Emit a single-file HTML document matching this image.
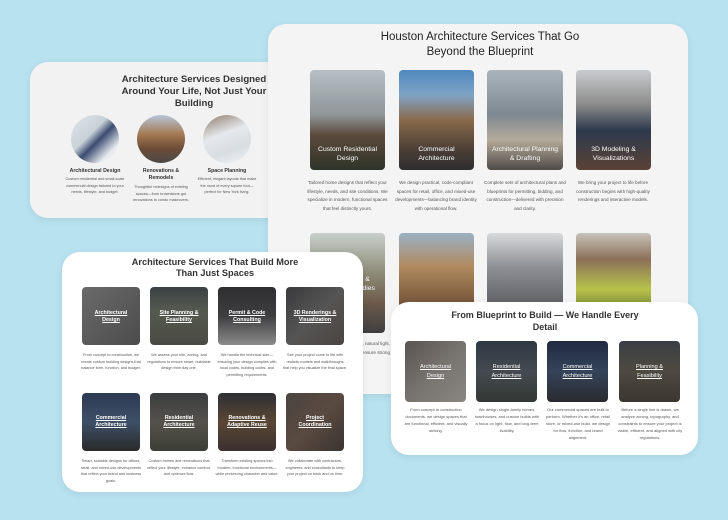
<!DOCTYPE html>
<html><head><meta charset="utf-8"><style>
*{margin:0;padding:0;box-sizing:border-box}
body{width:728px;height:520px;background:#b8e2f0;position:relative;overflow:hidden;font-family:"Liberation Sans",sans-serif}
.card{position:absolute;border-radius:18px;box-shadow:0 2px 8px rgba(0,0,0,.08)}
.ab{position:absolute}
.t{position:absolute;text-align:center;color:#333}
.img{position:absolute;border-radius:4px;overflow:hidden}
.ov{position:absolute;left:6px;right:6px;text-align:center;color:#fff;font-weight:bold}
.d{position:absolute;text-align:center;color:#555;font-size:4.3px;line-height:7.6px}
.u{text-decoration:underline}
</style></head><body>

<!-- Card A -->
<div class="card" style="left:30px;top:62px;width:300px;height:156px;background:#f2f2f2"></div>
<div class="t" style="left:110px;top:74px;width:168px;font-size:9.6px;line-height:12px;font-weight:bold;color:#333">Architecture Services Designed Around Your Life, Not Just Your Building</div>
<div class="ab" style="left:71px;top:115px;width:48px;height:48px;border-radius:50%;background:linear-gradient(135deg,#dfe6ea 0%,#c9d2d8 40%,#3b4b70 55%,#e8ecef 80%)"></div>
<div class="ab" style="left:137px;top:115px;width:48px;height:48px;border-radius:50%;background:linear-gradient(180deg,#b7c6d6 0%,#a47a54 40%,#6d4c36 70%,#4a4a4a 100%)"></div>
<div class="ab" style="left:203px;top:115px;width:48px;height:48px;border-radius:50%;background:linear-gradient(160deg,#8d7a6a 0%,#e5e8ec 40%,#d8dde2 70%,#f0f2f4 100%)"></div>
<div class="t" style="left:65px;top:168px;width:60px;font-size:5.2px;font-weight:bold">Architectural Design</div>
<div class="d" style="left:65px;top:176px;width:60px;font-size:3.8px;line-height:6.5px">Custom residential and small-scale commercial design tailored to your needs, lifestyle, and budget.</div>
<div class="t" style="left:131px;top:168px;width:60px;font-size:5.2px;line-height:7px;font-weight:bold">Renovations &amp; Remodels</div>
<div class="d" style="left:130px;top:184px;width:62px;font-size:3.8px;line-height:6.5px">Thoughtful redesigns of existing spaces—from brownstone gut renovations to condo makeovers.</div>
<div class="t" style="left:197px;top:168px;width:60px;font-size:5.2px;font-weight:bold">Space Planning</div>
<div class="d" style="left:197px;top:176px;width:60px;font-size:3.8px;line-height:6.5px">Efficient, elegant layouts that make the most of every square foot—perfect for New York living.</div>

<!-- Card B -->
<div class="card" style="left:268px;top:24px;width:420px;height:370px;background:#f4f4f4"></div>
<div class="t" style="left:370px;top:30px;width:220px;font-size:11.5px;line-height:15px;color:#222">Houston Architecture Services That Go Beyond the Blueprint</div>
<div class="img" style="left:310px;top:70px;width:75px;height:100px;background:linear-gradient(180deg,#b7bfc4 0%,#8f9599 45%,#5b4a3c 65%,#2e3428 100%)"><div class="ov" style="top:75px;font-size:6.8px;line-height:9px;font-weight:normal">Custom Residential Design</div></div>
<div class="img" style="left:399px;top:70px;width:75px;height:100px;background:linear-gradient(180deg,#4f88c0 0%,#7fa3c4 25%,#8a6a4c 50%,#4a3e36 80%,#2e2e2e 100%)"><div class="ov" style="top:75px;font-size:6.8px;line-height:9px;font-weight:normal">Commercial Architecture</div></div>
<div class="img" style="left:487px;top:70px;width:76px;height:100px;background:linear-gradient(180deg,#a9b4bd 0%,#7e8890 45%,#b4aa9a 70%,#4e4a46 100%)"><div class="ov" style="top:75px;left:2px;right:2px;font-size:6.8px;line-height:9px;font-weight:normal">Architectural Planning &amp; Drafting</div></div>
<div class="img" style="left:576px;top:70px;width:75px;height:100px;background:linear-gradient(180deg,#c9ccce 0%,#8a8a8a 35%,#2e3a4e 60%,#5a4236 100%)"><div class="ov" style="top:75px;font-size:6.8px;line-height:9px;font-weight:normal">3D Modeling &amp; Visualizations</div></div>
<div class="d" style="left:306px;top:179px;width:83px;font-size:4.6px;line-height:8.7px">Tailored home designs that reflect your lifestyle, needs, and site conditions. We specialize in modern, functional spaces that feel distinctly yours.</div>
<div class="d" style="left:394px;top:179px;width:84px;font-size:4.6px;line-height:8.7px">We design practical, code-compliant spaces for retail, office, and mixed-use developments—balancing brand identity with operational flow.</div>
<div class="d" style="left:483px;top:179px;width:84px;font-size:4.6px;line-height:8.7px">Complete sets of architectural plans and blueprints for permitting, bidding, and construction—delivered with precision and clarity.</div>
<div class="d" style="left:571px;top:179px;width:84px;font-size:4.6px;line-height:8.7px">We bring your project to life before construction begins with high-quality renderings and interactive models.</div>
<div class="img" style="left:310px;top:233px;width:75px;height:100px;background:linear-gradient(180deg,#c8cfcc 0%,#8d8c78 40%,#6d5a4a 70%,#3e3e40 100%)"><div class="ov" style="top:42px;font-size:6.8px;line-height:9px;font-weight:normal">3D Modeling &amp; Feasibility Studies</div></div>
<div class="img" style="left:399px;top:233px;width:75px;height:75px;background:linear-gradient(180deg,#9ab0c4 0%,#b08a5e 45%,#6e5036 100%)"></div>
<div class="img" style="left:487px;top:233px;width:76px;height:75px;background:linear-gradient(180deg,#d9dadb 0%,#8d9095 45%,#5a5c60 100%)"></div>
<div class="img" style="left:576px;top:233px;width:75px;height:75px;background:linear-gradient(180deg,#c7c2bb 0%,#8a7058 35%,#b7c34a 75%,#7e8a3a 100%)"></div>
<div class="d" style="left:320px;top:340px;width:70px;font-size:4.6px;line-height:8.7px;text-align:right">we evaluate zoning, natural light, to ensure strong</div>

<!-- Card C -->
<div class="card" style="left:62px;top:252px;width:301px;height:240px;background:#fff"></div>
<div class="t" style="left:120px;top:257px;width:190px;font-size:9.2px;line-height:11px;font-weight:bold;color:#333">Architecture Services That Build More Than Just Spaces</div>
<div class="img" style="left:82px;top:287px;width:58px;height:58px;background:linear-gradient(135deg,#6a6a6a,#4c4c4c)"><div class="ov u" style="top:23px;font-size:5.3px;line-height:7px">Architectural Design</div></div>
<div class="img" style="left:150px;top:287px;width:58px;height:58px;background:linear-gradient(180deg,#3a4044,#555a50 40%,#4a4a44)"><div class="ov u" style="top:23px;left:2px;right:2px;font-size:5.3px;line-height:7px">Site Planning &amp; Feasibility</div></div>
<div class="img" style="left:218px;top:287px;width:58px;height:58px;background:linear-gradient(180deg,#2e2e30,#3e3e40 50%,#8c8c8c)"><div class="ov u" style="top:23px;left:2px;right:2px;font-size:5.3px;line-height:7px">Permit &amp; Code Consulting</div></div>
<div class="img" style="left:286px;top:287px;width:58px;height:58px;background:linear-gradient(135deg,#3a3a3c,#555 50%,#4a4440)"><div class="ov u" style="top:23px;left:2px;right:2px;font-size:5.3px;line-height:7px">3D Renderings &amp; Visualization</div></div>
<div class="d" style="left:79px;top:352px;width:64px;font-size:3.8px;line-height:6.5px">From concept to construction, we create custom building designs that balance form, function, and budget.</div>
<div class="d" style="left:147px;top:352px;width:64px;font-size:3.8px;line-height:6.5px">We assess your site, zoning, and regulations to ensure smart, buildable design from day one.</div>
<div class="d" style="left:215px;top:352px;width:64px;font-size:3.8px;line-height:6.5px">We handle the technical side—ensuring your design complies with local codes, building codes, and permitting requirements.</div>
<div class="d" style="left:283px;top:352px;width:64px;font-size:3.8px;line-height:6.5px">See your project come to life with realistic models and walkthroughs that help you visualize the final space.</div>
<div class="img" style="left:82px;top:393px;width:58px;height:58px;background:linear-gradient(180deg,#2c3a52,#3d5068 50%,#2a2a2a)"><div class="ov u" style="top:22px;font-size:5.3px;line-height:7px">Commercial Architecture</div></div>
<div class="img" style="left:150px;top:393px;width:58px;height:58px;background:linear-gradient(180deg,#3a3c3e,#55524c 50%,#3b3e36)"><div class="ov u" style="top:22px;font-size:5.3px;line-height:7px">Residential Architecture</div></div>
<div class="img" style="left:218px;top:393px;width:58px;height:58px;background:linear-gradient(180deg,#2e3034,#5a4634 50%,#3a3030)"><div class="ov u" style="top:22px;left:2px;right:2px;font-size:5.3px;line-height:7px">Renovations &amp; Adaptive Reuse</div></div>
<div class="img" style="left:286px;top:393px;width:58px;height:58px;background:linear-gradient(135deg,#4a4440,#5a4a40 50%,#3a3430)"><div class="ov u" style="top:22px;font-size:5.3px;line-height:7px">Project Coordination</div></div>
<div class="d" style="left:79px;top:458px;width:64px;font-size:3.8px;line-height:6.5px">Smart, scalable designs for offices, retail, and mixed-use developments that reflect your brand and business goals.</div>
<div class="d" style="left:147px;top:458px;width:64px;font-size:3.8px;line-height:6.5px">Custom homes and renovations that reflect your lifestyle, enhance comfort, and optimize flow.</div>
<div class="d" style="left:215px;top:458px;width:64px;font-size:3.8px;line-height:6.5px">Transform existing spaces into modern, functional environments—while preserving character and value.</div>
<div class="d" style="left:283px;top:458px;width:64px;font-size:3.8px;line-height:6.5px">We collaborate with contractors, engineers, and consultants to keep your project on track and on time.</div>

<!-- Card D -->
<div class="card" style="left:391px;top:302px;width:307px;height:153px;background:#fff"></div>
<div class="t" style="left:450px;top:310px;width:190px;font-size:9px;line-height:11.5px;font-weight:bold;color:#333">From Blueprint to Build — We Handle Every Detail</div>
<div class="img" style="left:405px;top:341px;width:61px;height:61px;background:linear-gradient(135deg,#5a5450,#77736e 50%,#8a8682)"><div class="ov u" style="top:22px;font-size:5.6px;line-height:9px;font-weight:normal">Architectural Design</div></div>
<div class="img" style="left:476px;top:341px;width:61px;height:61px;background:linear-gradient(180deg,#2e3844,#444a50 50%,#343834)"><div class="ov u" style="top:22px;font-size:5.6px;line-height:9px;font-weight:normal">Residential Architecture</div></div>
<div class="img" style="left:547px;top:341px;width:61px;height:61px;background:linear-gradient(180deg,#202a40,#34445a 50%,#2a2a2e)"><div class="ov u" style="top:22px;font-size:5.6px;line-height:9px;font-weight:normal">Commercial Architecture</div></div>
<div class="img" style="left:619px;top:341px;width:61px;height:61px;background:linear-gradient(180deg,#3a3e44,#4e4a40 50%,#3a3630)"><div class="ov u" style="top:22px;left:9px;right:9px;font-size:5.6px;line-height:9px;font-weight:normal">Planning &amp; Feasibility</div></div>
<div class="d" style="left:403px;top:406px;width:66px;font-size:4px;line-height:7px">From concept to construction documents, we design spaces that are functional, efficient, and visually striking.</div>
<div class="d" style="left:474px;top:406px;width:66px;font-size:4px;line-height:7px">We design single-family homes, townhouses, and custom builds with a focus on light, flow, and long-term livability.</div>
<div class="d" style="left:545px;top:406px;width:66px;font-size:4px;line-height:7px">Our commercial spaces are built to perform. Whether it's an office, retail store, or mixed-use build, we design for flow, function, and brand alignment.</div>
<div class="d" style="left:617px;top:406px;width:66px;font-size:4px;line-height:7px">Before a single line is drawn, we analyze zoning, topography, and constraints to ensure your project is viable, efficient, and aligned with city regulations.</div>
</body></html>
